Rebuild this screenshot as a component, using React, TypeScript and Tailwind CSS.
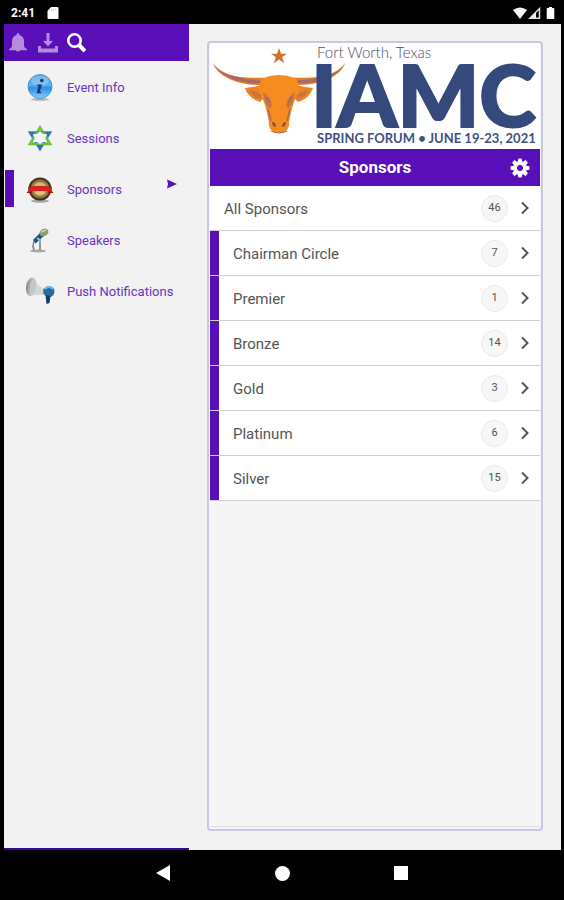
import React from "react";

type NavItem = { label: string; icon: React.ReactNode; active?: boolean };
type Tier = { name: string; count: number; all?: boolean };

function InfoIcon() {
  return (
    <svg viewBox="0 0 28 30" className="h-[30px] w-7" aria-hidden="true">
      <defs>
        <linearGradient id="info" x1="0" y1="0" x2="0" y2="1">
          <stop offset="0" stopColor="#4a9be0" />
          <stop offset="0.45" stopColor="#5cb2f2" />
          <stop offset="0.55" stopColor="#2f8de2" />
          <stop offset="1" stopColor="#7fd4ff" />
        </linearGradient>
      </defs>
      <ellipse cx="14" cy="27.5" rx="9" ry="1.5" fill="#b5b5b5" />
      <circle cx="14" cy="14.5" r="12" fill="url(#info)" stroke="#3f86c8" strokeWidth="0.8" />
      <ellipse cx="14" cy="8.5" rx="9" ry="5" fill="#fff" opacity="0.25" />
      <circle cx="15.8" cy="8.6" r="1.8" fill="#123a78" />
      <path d="M11.500 12.500h4.500l-2.200 7.200h1.600l-.5 1.500h-4.300l2-7.200h-1.500z" fill="#123a78" />
    </svg>
  );
}

function SessionsIcon() {
  return (
    <svg viewBox="0 0 28 30" className="h-[30px] w-7" fill="none" aria-hidden="true">
      <path d="M4 9.500h20L14 26z" stroke="#3c83b8" strokeWidth="2.600" />
      <path d="M14 4.500L24 21H4z" stroke="#62b944" strokeWidth="2.600" />
      <path d="M3 9.500h6l-3 4zM25 9.500h-6l3 4zM11 22h6l-3 5z" fill="#2b72b5" />
      <path d="M14 3l3 5h-6zM3 22l3-5 3 4.500zM25 22l-3-5-3 4.500z" fill="#72cb3c" />
      <path d="M14 8.500l3 2.500 4 0-1.500 4 1.500 4-4 0-3 2.500-3-2.500-4 0 1.500-4L7 11l4 0z" fill="#f4f6f6" />
    </svg>
  );
}

function SponsorsIcon() {
  return (
    <svg viewBox="0 0 28 30" className="h-[30px] w-7" aria-hidden="true">
      <defs>
        <radialGradient id="seal">
          <stop offset="0" stopColor="#f4dfa0" />
          <stop offset="0.7" stopColor="#d2b069" />
          <stop offset="1" stopColor="#5d4521" />
        </radialGradient>
      </defs>
      <ellipse cx="14" cy="27" rx="9" ry="1.7" fill="#aaa" />
      <circle cx="14" cy="15" r="11.500" fill="#3f301c" />
      <circle cx="14" cy="15" r="10" fill="url(#seal)" />
      <circle cx="14" cy="15" r="7.500" fill="none" stroke="#836331" />
      <path d="M2 13.500l4-1v6.500H.5l2-2.500zM26 13.500l-4-1v6.500h5.500l-2-2.500z" fill="#9b1414" />
      <path d="M3.500 13q10.500-2.500 21 0l1.500 5q-12-2-24 0z" fill="#d3221c" />
    </svg>
  );
}

function SpeakersIcon() {
  return (
    <svg viewBox="0 0 28 30" className="h-[30px] w-7" fill="none" aria-hidden="true">
      <ellipse cx="12" cy="26" rx="8" ry="1.500" fill="#a3a8a8" />
      <path d="M14 14v11M11 13q-6 5-3 12" stroke="#77828a" strokeWidth="1.600" />
      <path d="M16 6L7 15l2.500 3.500L19 10z" fill="#244f77" />
      <path d="M11 13l4 3" stroke="#8cc6e6" strokeWidth="2" />
      <ellipse cx="18" cy="7.500" rx="4.500" ry="3.500" transform="rotate(-25 18 7.500)" fill="#899c76" />
      <path d="M15 7l5-2" stroke="#c9d4b2" strokeWidth="1.500" />
    </svg>
  );
}

function PushIcon() {
  return (
    <svg viewBox="0 0 30 30" className="h-[30px] w-[30px]" aria-hidden="true">
      <defs>
        <linearGradient id="horn" x1="0" y1="0" x2="1" y2="0">
          <stop offset="0" stopColor="#7c8890" />
          <stop offset="0.5" stopColor="#bfc5c7" />
          <stop offset="1" stopColor="#dededa" />
        </linearGradient>
      </defs>
      <path d="M9 6l10 7v6l-10 0z" fill="#d5d7d4" />
      <ellipse cx="6.500" cy="11" rx="5.500" ry="9.500" transform="rotate(8 7 11)" fill="url(#horn)" />
      <ellipse cx="8" cy="11" rx="3" ry="7" transform="rotate(8 8 11)" fill="#c2c8ca" />
      <path d="M18 13l4-1v7l-4-1z" fill="#7f95a5" />
      <circle cx="24" cy="15.500" r="5.500" fill="#296ca5" />
      <path d="M20 13q4-4 8 0" fill="none" stroke="#78b9e4" strokeWidth="2" />
      <path d="M20.500 19l5 1-1 7-3 1z" fill="#163a5c" />
    </svg>
  );
}

const navItems: NavItem[] = [
  { label: "Event Info", icon: <InfoIcon /> },
  { label: "Sessions", icon: <SessionsIcon /> },
  { label: "Sponsors", icon: <SponsorsIcon />, active: true },
  { label: "Speakers", icon: <SpeakersIcon /> },
  { label: "Push Notifications", icon: <PushIcon /> },
];

const tiers: Tier[] = [
  { name: "All Sponsors", count: 46, all: true },
  { name: "Chairman Circle", count: 7 },
  { name: "Premier", count: 1 },
  { name: "Bronze", count: 14 },
  { name: "Gold", count: 3 },
  { name: "Platinum", count: 6 },
  { name: "Silver", count: 15 },
];

function StatusBar() {
  return (
    <header className="flex h-6 shrink-0 items-center bg-black pl-[7px] pr-1 pt-0.5 text-white">
      <span className="text-xs font-bold leading-6">2:41</span>
      <svg viewBox="0 0 12 12" className="ml-3 h-3 w-3" fill="#fff" aria-hidden="true">
        <path d="M4 0h6.500q1 0 1 1v10q0 1-1 1h-9q-1 0-1-1V4z" />
        <path d="M4.500 2v2M6.500 2v2M8.500 2v2" stroke="#ccc" strokeWidth="0.800" />
      </svg>
      <svg viewBox="0 0 44 14" className="ml-auto h-3.5 w-11" aria-hidden="true">
        <path d="M0 4q7-5 14 0L7 13z" fill="#fff" />
        <path d="M26.500 2.500v9.800H16.800z" fill="none" stroke="#ddd" strokeWidth="1.500" />
        <path d="M23 6v6.500h-6.500z" fill="#eee" />
        <path d="M34.500 2h1.500V1h3v1h1.500q.8 0 .8.800v9.400q0 .8-.8.800h-6q-.8 0-.8-.8V2.800q0-.8.800-.8z" fill="#fff" />
      </svg>
    </header>
  );
}

function Sidebar() {
  return (
    <aside className="flex w-[185px] shrink-0 flex-col border-b-2 border-[#35098a]">
      <div className="flex h-[37px] items-center bg-[#590fb7]">
        <button aria-label="Notifications" className="ml-1 flex h-6 w-5 items-center justify-center">
          <svg viewBox="0 0 20 20" className="h-5 w-5" fill="#b48be0" aria-hidden="true">
            <path d="M10 0q1.500 0 1.500 2 4.500 1.500 4.500 6v4q0 3 3 4v1.200H1V16q3-1 3-4V8q0-4.500 4.500-6 0-2 1.500-2z" />
            <path d="M7.500 17h5q-2.500 3-5 0z" />
          </svg>
        </button>
        <button aria-label="Download" className="ml-2.5 flex h-6 w-5 items-center justify-center">
          <svg viewBox="0 0 20 20" className="h-5 w-5" fill="#b48be0" aria-hidden="true">
            <path d="M8.500 0h3v8h3.500l-5 5.500L5 8h3.500z" />
            <path d="M0 13h3v2.500h14V13h3v6.500H0z" />
          </svg>
        </button>
        <button aria-label="Search" className="ml-2 flex h-6 w-5 items-center justify-center">
          <svg viewBox="0 0 20 20" className="h-5 w-5" fill="none" stroke="#fff" aria-hidden="true">
            <circle cx="8.500" cy="7.500" r="6.200" strokeWidth="2.600" />
            <path d="M13 12l6 6" strokeWidth="4" />
          </svg>
        </button>
      </div>
      <nav>
        {navItems.map((item) => (
          <a
            key={item.label}
            href="#"
            aria-current={item.active ? "page" : undefined}
            className="flex h-[51px] items-center text-[13px] text-[#6a35c0]"
          >
            <span className={item.active ? "ml-px h-[37px] w-[9px] bg-[#590fb7]" : "ml-px h-[37px] w-[9px]"} />
            <span className="ml-[11px] flex w-[30px] justify-center">{item.icon}</span>
            <span className="ml-3 whitespace-nowrap pt-0.5">{item.label}</span>
            {item.active && (
              <svg viewBox="0 0 10 10" className="mb-2.5 ml-auto mr-3 h-2.5 w-2.5" fill="#590fb7" aria-hidden="true">
                <path d="M0 0.500L10 5 0 9.500l1-4.500z" />
              </svg>
            )}
          </a>
        ))}
      </nav>
    </aside>
  );
}

function Banner() {
  return (
    <svg viewBox="210 43 330 106" className="block w-full bg-white" role="img" aria-label="IAMC Spring Forum">
      <path d="M279 48l2 5.700h6l-4.800 3.600 1.900 5.900-5.100-3.600-5.100 3.600 1.900-5.900-4.800-3.600h6z" fill="#cf7330" />
      <path d="M212.500 62.500q10 14 34 15 10 .5 17 0l4 7q-21 2-37-5-14-6-18-17z" fill="#df7c26" />
      <path d="M345.500 62.500q-10 14-34 15-10 .5-17 0l-4 7q21 2 37-5 14-6 18-17z" fill="#df7c26" />
      <path d="M214 66q10 13 30 16 11 2 21 1l3-3q-18 1-30-3-17-3-24-11zM344 66q-10 13-30 16-11 2-21 1l-3-3q18 1 30-3 17-3 24-11z" fill="#a96868" />
      <path d="M263 85q-8 2-18 3 3 10 15 14l6-6zM295 85q8 2 18 3-3 10-15 14l-6-6z" fill="#ec8424" />
      <path d="M249 90q7 1 13 5l-2 4q-7-2-11-9zM309 90q-7 1-13 5l2 4q7-2 11-9z" fill="#cf7437" />
      <path d="M263 78q16-6 32 0 5 4 4 12-5 11-7 19-3 10-3 17-2 7-10 7t-10-7q0-7-3-17-2-8-7-19-1-8 4-12z" fill="#f68b20" />
      <path d="M263 92q7 4 9 13-1 4-3 3-5-5-6-16zM295 92q-7 4-9 13 1 4 3 3 5-5 6-16z" fill="#c0754a" />
      <path d="M266 97l4 5M292 97l-4 5M268 109l3 12M290 109l-3 12" stroke="#9f6b69" strokeWidth="1.500" />
      <path d="M272 122q4 0 4 5-4 0-4-5zM286 122q-4 0-4 5 4 0 4-5z" fill="#91514a" />
      <path d="M271 131q8 4 16 0" fill="none" stroke="#b96333" />
      <text x="317" y="58" fontSize="15" className="font-['Lato',sans-serif] font-light" fill="#4a5068">
        Fort Worth, Texas
      </text>
      <text
        x="311"
        y="127"
        fontSize="86"
        className="font-['Lato',sans-serif] font-black"
        fill="#36497d"
        stroke="#36497d"
        strokeWidth="2"
      >
        IAMC
      </text>
      <text x="317" y="143" fontSize="13" className="font-['Lato',sans-serif] font-bold" fill="#41517f">
        SPRING FORUM • JUNE 19-23, 2021
      </text>
    </svg>
  );
}

function GearIcon() {
  return (
    <svg viewBox="-10 -10 20 20" className="block h-5 w-5" aria-hidden="true">
      <g fill="#fff">
        {[0, 45, 90, 135].map((angle) => (
          <rect key={angle} x="-2" y="-9.500" width="4" height="19" rx="1" transform={`rotate(${angle})`} />
        ))}
        <circle r="7" />
      </g>
      <circle r="3" fill="#590fb7" />
    </svg>
  );
}

function TierRow({ tier }: { tier: Tier }) {
  return (
    <li>
      <button
        className={
          "flex h-[45px] w-full items-center border-b border-[#cfcfcf] bg-white pr-[9px] text-left text-[15px] text-[#555] " +
          (tier.all ? "pl-3.5" : "pl-0")
        }
      >
        {!tier.all && <span className="mr-3.5 h-full w-[9px] bg-[#590fb7]" />}
        <span className="pt-0.5">{tier.name}</span>
        <span className="ml-auto flex h-[27px] w-[27px] items-center justify-center rounded-full border border-[#e9e9e9] bg-[#f7f7f7] text-[11px] text-[#555]">
          {tier.count}
        </span>
        <svg viewBox="0 0 12 14" className="ml-[11px] h-3.5 w-3" fill="none" stroke="#555" strokeWidth="2" aria-hidden="true">
          <path d="M3 1.500L8.500 7 3 12.500" />
        </svg>
      </button>
    </li>
  );
}

export default function App() {
  return (
    <div className="flex min-h-screen flex-col bg-black pl-1 pr-[3px] font-['Roboto',sans-serif]">
      <StatusBar />
      <div className="flex flex-1 bg-[#f2f2f2]">
        <Sidebar />
        <main className="mb-[19px] ml-[18px] mr-[18px] mt-[17px] flex min-w-0 flex-1 flex-col rounded-sm border-2 border-[#cbc6e6] bg-[#f5f5f5] px-px">
          <Banner />
          <div className="flex h-[37px] items-center bg-[#590fb7] pr-2.5 text-white">
            <span className="w-[30px]" />
            <h1 className="flex-1 text-center text-[17px] font-bold">Sponsors</h1>
            <button aria-label="Settings">
              <GearIcon />
            </button>
          </div>
          <ul>
            {tiers.map((tier) => (
              <TierRow key={tier.name} tier={tier} />
            ))}
          </ul>
          <div className="mb-0.5 mt-auto border-b border-[#dddddd]" />
        </main>
      </div>
      <footer className="flex h-[50px] shrink-0 items-center justify-center gap-[104px] bg-black pb-1 pr-[3px]">
        <button aria-label="Back">
          <svg viewBox="0 0 16 16" className="block h-4 w-4" fill="#fff" aria-hidden="true">
            <path d="M15 0v16L1 8z" />
          </svg>
        </button>
        <button aria-label="Home" className="h-[15px] w-[15px] rounded-full bg-white" />
        <button aria-label="Recent apps" className="h-3.5 w-3.5 bg-white" />
      </footer>
    </div>
  );
}
